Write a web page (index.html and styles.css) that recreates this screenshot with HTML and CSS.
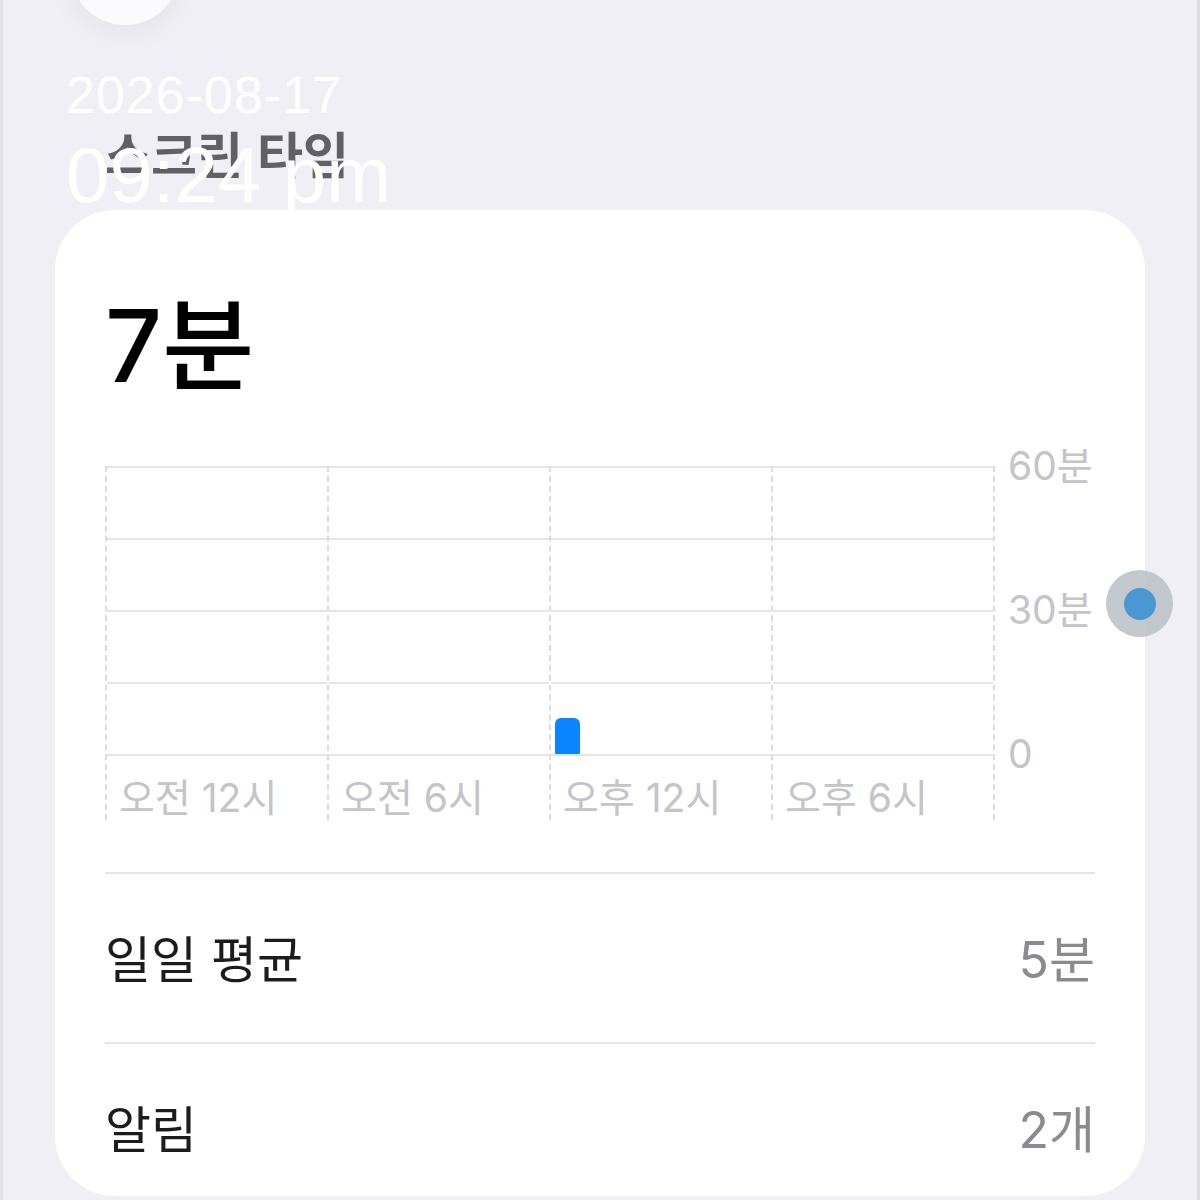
FILE: index.html
```html
<!DOCTYPE html>
<html lang="ko">
<head>
    <meta charset="UTF-8">
    <meta name="viewport" content="width=device-width, initial-scale=1.0">
    <title>스크린 타임</title>
    <link rel="stylesheet" href="styles.css">
</head>
<body>

    <div class="screen">
        <div class="avatar"></div>

        <h1 class="title">스크린 타임</h1>

        <!-- Usage card -->
        <div class="card">
            <div class="total">7분</div>

            <div class="chart">
                <div class="plot">
                    <div class="slot">
                        <div class="area"></div>
                        <div class="xlabel">오전 12시</div>
                    </div>
                    <div class="slot">
                        <div class="area"></div>
                        <div class="xlabel">오전 6시</div>
                    </div>
                    <div class="slot">
                        <div class="area"><div class="bar"></div></div>
                        <div class="xlabel">오후 12시</div>
                    </div>
                    <div class="slot">
                        <div class="area"></div>
                        <div class="xlabel">오후 6시</div>
                    </div>
                </div>
                <div class="yaxis">
                    <span>60분</span>
                    <span>30분</span>
                    <span>0</span>
                </div>
            </div>

            <div class="stats">
                <div class="row">
                    <span class="name">일일 평균</span>
                    <span class="value">5분</span>
                </div>
                <div class="row">
                    <span class="name">알림</span>
                    <span class="value">2개</span>
                </div>
            </div>
        </div>
    </div>

    <!-- photo timestamp -->
    <div class="stamp">
        <div class="date">2026-08-17</div>
        <div class="time">09:24 pm</div>
    </div>

    <!-- assistive touch dot -->
    <div class="touch"><div class="touch-dot"></div></div>

</body>
</html>
```

FILE: styles.css
```css
/* General Styles */
html, body {
    margin: 0;
    height: 1200px;
    overflow: hidden;
}

body {
    background-color: #f0eff5;
    font-family: Inter, "Noto Sans CJK KR", sans-serif;
    position: relative;
}

.screen {
    display: flow-root;
    height: 1200px;
    box-sizing: border-box;
    border-left: 3px solid #e2e1e6;
    border-right: 3px solid #dedde2;
}

.avatar {
    width: 110px;
    height: 110px;
    margin: -85px 0 0 67px;
    border-radius: 50%;
    background: #fbfbfd;
    box-shadow: 0 6px 30px rgba(0,0,0,0.05);
}

.title {
    margin: 97px 0 0 102px;
    font-size: 50px;
    line-height: 60px;
    font-weight: 700;
    color: #606065;
    font-family: "Noto Sans CJK KR", sans-serif;
}

/* Card */
.card {
    margin: 28px 52px 0 52px;
    padding: 88px 50px 0 50px;
    background: white;
    border-radius: 60px;
}

.total {
    font-size: 100px;
    line-height: 96px;
    font-weight: 500;
    color: #000;
}

/* Chart */
.chart {
    display: flex;
    margin-top: 72px;
}

.plot {
    width: 888px;
    display: grid;
    grid-template-columns: repeat(4, 1fr);
    border-right: 2px dashed #dcdce0;
}

.slot {
    border-left: 2px dashed #dcdce0;
}

.area {
    height: 288px;
    display: flex;
    align-items: flex-end;
    padding-left: 4px;
    background: repeating-linear-gradient(to bottom, #e4e4e9 0 2px, transparent 2px 72px);
    border-bottom: 2px solid #e4e4e9;
}

.bar {
    width: 25px;
    height: 36px;
    background: #0a84ff;
    border-radius: 6px 6px 1px 1px;
}

.xlabel {
    padding: 20px 0 0 12px;
    font-size: 39px;
    line-height: 44px;
    color: #c4c4c9;
    white-space: nowrap;
}

.yaxis {
    height: 328px;
    margin-top: -20px;
    padding-left: 13px;
    display: flex;
    flex-direction: column;
    justify-content: space-between;
    font-size: 39px;
    line-height: 40px;
    color: #c4c4c9;
}

/* Stats rows */
.stats {
    margin-top: 52px;
}

.row {
    height: 170px;
    box-sizing: border-box;
    padding-top: 60px;
    display: flex;
    justify-content: space-between;
    border-top: 2px solid #e4e4e9;
    font-size: 50px;
    line-height: 52px;
}

.row:last-child {
    height: 154px;
}

.name { color: #1c1c1e; }
.value { color: #8a8a8f; }

/* Timestamp overlay */
.stamp {
    position: absolute;
    left: 66px;
    top: 69px;
    color: white;
    font-family: "Liberation Sans", Arial, sans-serif;
    line-height: 1;
}

.date {
    font-size: 52px;
    letter-spacing: 1px;
}

.time {
    margin-top: 15px;
    font-size: 78px;
}

/* Assistive touch */
.touch {
    position: absolute;
    left: 1106px;
    top: 570px;
    width: 67px;
    height: 67px;
    border-radius: 50%;
    background: rgba(186,191,198,0.85);
    display: flex;
    align-items: center;
    justify-content: center;
}

.touch-dot {
    width: 32px;
    height: 32px;
    border-radius: 50%;
    background: #4b97d2;
}
```
